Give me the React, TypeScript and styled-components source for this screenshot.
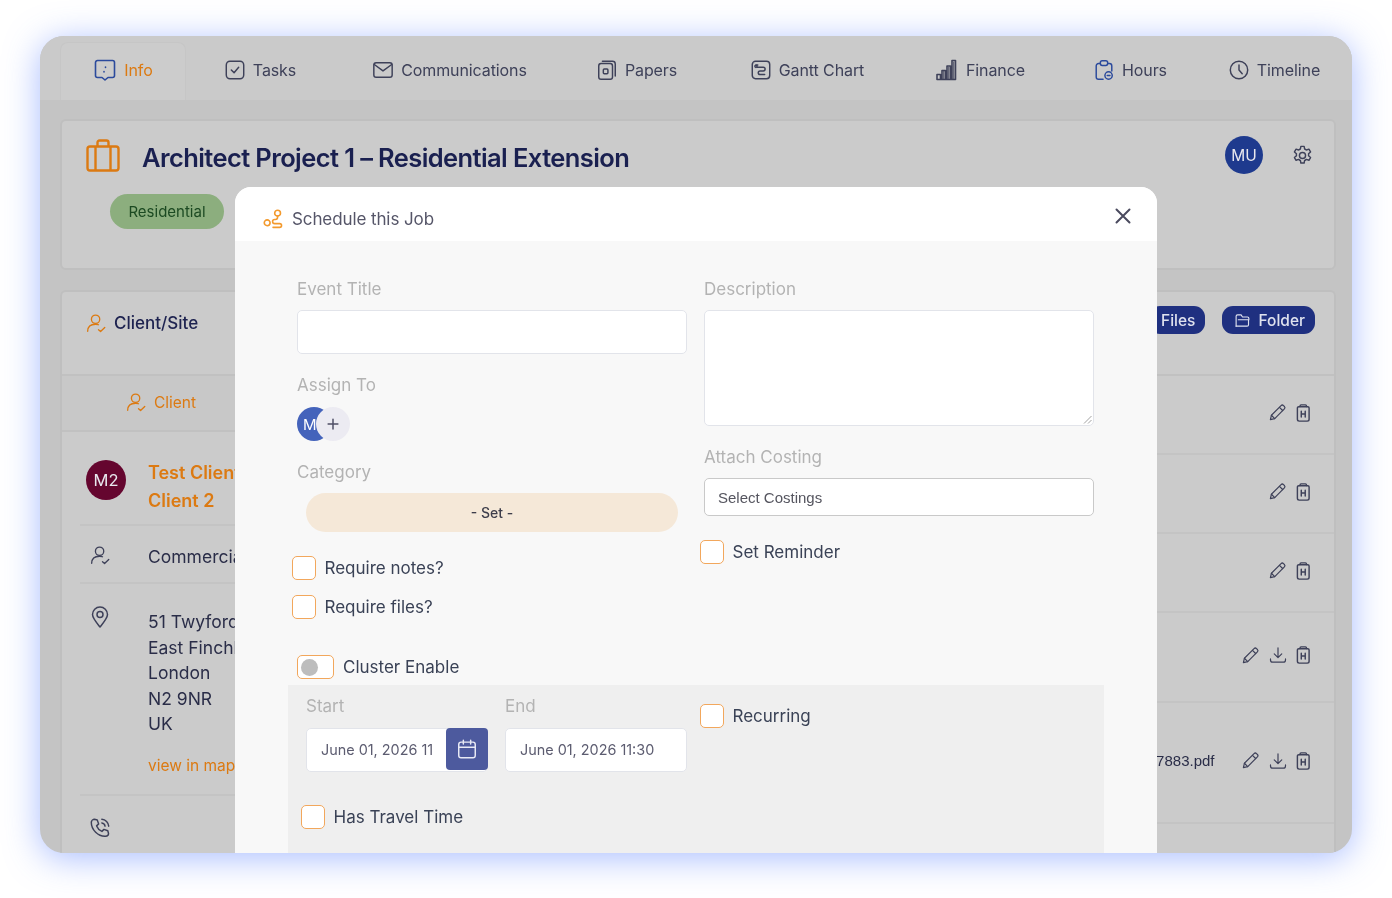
import React from 'react';
import styled, { createGlobalStyle } from 'styled-components';

const GlobalStyle = createGlobalStyle`
  html, body {
    margin: 0;
    padding: 0;
    background: #fff;
    font-family: Inter, "Noto Sans", "Liberation Sans", sans-serif;
  }
  * { box-sizing: border-box; }
`;

const Page = styled.div`
  width: 1392px;
  height: 898px;
  padding: 36px 40px 45px;
  overflow: hidden;
  filter: blur(0.35px);
`;

const Window = styled.div`
  position: relative;
  height: 817px;
  border-radius: 24px;
  background: #c4c4c4;
  box-shadow: 0 5px 34px rgba(84, 124, 255, 0.5);
  overflow: hidden;
  display: flex;
  flex-direction: column;
`;

const TabBar = styled.div`
  height: 64px;
  flex: none;
  display: grid;
  grid-template-columns: 126px 148px 231px 143px 198px 148px 152px 136px;
  padding: 6px 0 0 20px;
  background: #cacaca;
`;

const Tab = styled.div<{ $active?: boolean }>`
  display: flex;
  align-items: center;
  justify-content: center;
  gap: 7px;
  padding-bottom: 4px;
  font-size: 16px;
  letter-spacing: -0.1px;
  white-space: nowrap;
  color: ${(p) => (p.$active ? '#dc7a12' : '#3e4159')};
  background: ${(p) => (p.$active ? '#cccccc' : 'transparent')};
  border: 1px solid ${(p) => (p.$active ? '#c6c6c6' : 'transparent')};
  border-bottom: none;
  border-radius: 8px 8px 0 0;
`;

const TabIcon = styled.span<{ $blue?: boolean }>`
  display: flex;
  color: ${(p) => (p.$blue ? '#2b4a9c' : '#3e4159')};
`;

const Main = styled.div`
  flex: 1;
  display: flex;
  flex-direction: column;
  gap: 20px;
  padding: 19px 16px 0 20px;
`;

const Card = styled.div`
  background: #cbcbcb;
  border: 2px solid #bfbfbf;
  border-radius: 6px;
`;

const ProjectCard = styled(Card)`
  height: 151px;
  padding: 14px 20px 0 24px;
`;

const ProjectHead = styled.div`
  display: flex;
  align-items: center;
  gap: 22px;
  height: 40px;
`;

const ProjectTitle = styled.h1`
  flex: 1;
  margin: 4px 0 0;
  font-size: 25.5px;
  font-weight: 600;
  letter-spacing: -0.6px;
  color: #1a2050;
`;

const Avatar = styled.div<{ $bg: string; $size: number }>`
  width: ${(p) => p.$size}px;
  height: ${(p) => p.$size}px;
  flex: none;
  border-radius: 50%;
  display: flex;
  align-items: center;
  justify-content: center;
  color: #e8e8ee;
  background: ${(p) => p.$bg};
  font-size: 15.5px;
`;

const HeadActions = styled.div`
  display: flex;
  align-items: center;
  gap: 28px;
  color: #3e4159;
`;

const Tag = styled.div`
  width: 114px;
  height: 35px;
  margin: 19px 0 0 24px;
  border-radius: 18px;
  background: #8cae7e;
  color: #1c4a22;
  font-size: 15px;
  display: flex;
  align-items: center;
  justify-content: center;
`;

const ClientCard = styled(Card)`
  flex: 1;
  border-bottom: none;
  border-radius: 6px 6px 0 0;
`;

const ClientHead = styled.div`
  height: 84px;
  padding: 14px 19px 0 24px;
  display: flex;
  justify-content: space-between;
  align-items: flex-start;
  border-bottom: 2px solid #c1c1c1;
`;

const SectionTitle = styled.div`
  display: flex;
  align-items: center;
  gap: 8px;
  height: 28px;
  margin-top: 3px;
  font-size: 17px;
  font-weight: 500;
  color: #1e2350;
  svg { color: #dc7a12; }
`;

const HeadButtons = styled.div`
  display: flex;
  gap: 17px;
`;

const NavyButton = styled.div`
  height: 28px;
  padding: 0 10px 0 12px;
  display: flex;
  align-items: center;
  gap: 7px;
  border-radius: 11px;
  background: #1f3080;
  color: #dfe2ee;
  font-size: 15.5px;
  font-weight: 500;
`;

const ClientBody = styled.div`
  display: grid;
  grid-template-columns: 1fr 1fr;
`;

const LeftPane = styled.div`
  display: flex;
  flex-direction: column;
`;

const SubTabs = styled.div`
  height: 56px;
  padding: 0 0 2px 64px;
  display: flex;
  align-items: center;
  border-bottom: 2px solid #c1c1c1;
  background: #c8c8c8;
`;

const SubTab = styled.div`
  display: flex;
  align-items: center;
  gap: 8px;
  color: #dc7a12;
  font-size: 15.5px;
`;

const InfoRow = styled.div<{ $height: number }>`
  height: ${(p) => p.$height}px;
  margin-left: 18px;
  padding-left: 6px;
  display: flex;
  align-items: flex-start;
  gap: 22px;
  color: #2a2d48;
  border-bottom: 2px solid #c4c4c4;
  &:last-child { border-bottom: none; }
`;

const IconCell = styled.div<{ $top: number; $left: number }>`
  width: 40px;
  flex: none;
  padding: ${(p) => p.$top}px 0 0 ${(p) => p.$left}px;
  color: #3e4159;
`;

const ClientAvatar = styled(Avatar)`
  margin-top: 28px;
  font-size: 16.5px;
`;

const ClientName = styled.div`
  padding-top: 27px;
  font-size: 18px;
  font-weight: 600;
  line-height: 28px;
  color: #dc7a12;
  white-space: nowrap;
`;

const InfoText = styled.div`
  padding-top: 19px;
  font-size: 17.5px;
  line-height: 24px;
  white-space: nowrap;
`;

const Address = styled.div`
  padding-top: 25px;
  font-size: 17.5px;
  line-height: 25.6px;
  white-space: nowrap;
`;

const MapLink = styled.div`
  margin-top: 16px;
  font-size: 15.5px;
  color: #dc7a12;
`;

const FileList = styled.div`
  display: flex;
  flex-direction: column;
`;

const FileRow = styled.div<{ $height: number }>`
  height: ${(p) => p.$height}px;
  padding: 0 24px 4px 0;
  display: flex;
  align-items: center;
  justify-content: flex-end;
  gap: 26px;
  border-bottom: 2px solid #c4c4c4;
  &:last-child { border-bottom: none; }
`;

const FileName = styled.div`
  font-family: "Liberation Sans", Arial, sans-serif;
  font-size: 15px;
  color: #2a2d48;
  white-space: nowrap;
`;

const FileActions = styled.div`
  display: flex;
  align-items: center;
  gap: 9px;
  color: #3e4159;
`;

const Modal = styled.div`
  position: absolute;
  left: 195px;
  top: 151px;
  bottom: -40px;
  width: 922px;
  border-radius: 16px;
  background: #f8f8f8;
  overflow: hidden;
`;

const ModalHead = styled.div`
  height: 54px;
  background: #fff;
  padding: 10px 24px 0 28px;
  display: flex;
  align-items: center;
  gap: 9px;
  font-size: 17px;
  letter-spacing: -0.1px;
  color: #555568;
`;

const ModalTitle = styled.div`
  flex: 1;
`;

const CloseIcon = styled.svg`
  margin-top: -6px;
  color: #4a4a5e;
`;

const ModalBody = styled.div`
  padding: 36px 62px 0;
`;

const FormGrid = styled.div`
  display: grid;
  grid-template-columns: 390px 390px;
  column-gap: 17px;
`;

const Column = styled.div`
  display: flex;
  flex-direction: column;
`;

const Label = styled.div<{ $top?: number; $gap?: number }>`
  height: 24px;
  margin-top: ${(p) => p.$top || 0}px;
  margin-bottom: ${(p) => p.$gap || 9}px;
  font-size: 17px;
  line-height: 24px;
  color: #b3b3b3;
`;

const TextInput = styled.div<{ $height: number }>`
  height: ${(p) => p.$height}px;
  background: #fff;
  border: 1.5px solid #e2e4ea;
  border-radius: 5px;
  padding: 0 14px 2px;
  display: flex;
  align-items: center;
  font-size: 14.4px;
  color: #5c5c70;
  white-space: nowrap;
  overflow: hidden;
`;

const DescriptionBox = styled(TextInput)`
  position: relative;
`;

const ResizeGrip = styled.svg`
  position: absolute;
  right: 1px;
  bottom: 1px;
  color: #8a8a8a;
`;

const SelectBox = styled(TextInput)`
  border-color: #c9c9c9;
  color: #55555f;
  padding: 0 13px;
  font-family: "Liberation Sans", Arial, sans-serif;
  font-size: 15px;
`;

const Assignees = styled.div`
  display: flex;
  height: 34px;
`;

const AssignAvatar = styled.div`
  width: 34px;
  height: 34px;
  border-radius: 50%;
  background: #4463bb;
  color: #fff;
  font-size: 15px;
  display: flex;
  align-items: center;
  padding-left: 6px;
`;

const AddAvatar = styled.div`
  width: 34px;
  height: 34px;
  margin-left: -15px;
  border-radius: 50%;
  background: #ecebf2;
  color: #4f4f66;
  display: flex;
  align-items: center;
  justify-content: center;
`;

const CategoryPill = styled.div`
  height: 39px;
  margin: 0 9px;
  width: 372px;
  border-radius: 20px;
  background: #f5e8d8;
  color: #3d3d4a;
  font-size: 14px;
  font-weight: 500;
  display: flex;
  align-items: center;
  justify-content: center;
`;

const CheckRow = styled.label<{ $top?: number; $left?: number }>`
  display: flex;
  align-items: center;
  gap: 9px;
  height: 24px;
  margin-top: ${(p) => p.$top || 0}px;
  margin-left: ${(p) => p.$left || 0}px;
  font-size: 17px;
  color: #3a4256;
`;

const CheckBox = styled.span`
  width: 23.5px;
  height: 24px;
  flex: none;
  background: #fff;
  border: 1.5px solid #f2a75c;
  border-radius: 5px;
`;

const ToggleRow = styled(CheckRow)`
  margin-top: 36px;
`;

const ToggleTrack = styled.span`
  width: 37px;
  height: 24px;
  flex: none;
  background: #fff;
  border: 1.5px solid #f2a75c;
  border-radius: 5px;
  display: flex;
  align-items: center;
  padding-left: 3px;
`;

const ToggleKnob = styled.span`
  width: 17px;
  height: 17px;
  border-radius: 50%;
  background: #bdbdbd;
`;

const Panel = styled.div`
  margin: 6px -9px 0;
  padding: 9px 9px 40px;
  height: 200px;
  background: #efefef;
  display: grid;
  grid-template-columns: 390px 390px;
  column-gap: 17px;
`;

const PanelLeft = styled.div`
  padding-left: 9px;
`;

const DateGrid = styled.div`
  display: grid;
  grid-template-columns: 182px 182px;
  column-gap: 17px;
`;

const DateField = styled.div`
  position: relative;
`;

const CalendarButton = styled.div`
  position: absolute;
  top: 0;
  right: 0;
  width: 42px;
  height: 42px;
  border-radius: 4px;
  background: #4d5a9e;
  color: #e8eaf5;
  display: flex;
  align-items: center;
  justify-content: center;
`;

const Ico = ({ size = 20, w = 1.6, children }: { size?: number; w?: number; children: React.ReactNode }) => (
  <svg width={size} height={size} viewBox="0 0 24 24" fill="none" stroke="currentColor" strokeWidth={w} strokeLinecap="round" strokeLinejoin="round">
    {children}
  </svg>
);

const InfoIcon = () => (
  <Ico size={24}>
    <path d="M4.5 2.5h15a2 2 0 0 1 2 2v13a2 2 0 0 1-2 2H15l-3 2.5L9 19.5H4.5a2 2 0 0 1-2-2v-13a2 2 0 0 1 2-2z" />
    <path d="M11 13.5v.5M12.5 9v.5" />
  </Ico>
);
const TasksIcon = () => (
  <Ico size={22}>
    <rect x="2.5" y="2.5" width="19" height="19" rx="4" />
    <path d="M8 12l3 3 5-6" />
  </Ico>
);
const MailIcon = () => (
  <Ico size={22}>
    <rect x="2" y="4" width="20" height="16" rx="2.5" />
    <path d="M2.5 6l9.5 7 9.5-7" />
  </Ico>
);
const PapersIcon = () => (
  <Ico size={22}>
    <rect x="3" y="5" width="15" height="17" rx="2.5" />
    <path d="M7 2.5h11a3 3 0 0 1 3 3v13" />
    <rect x="8" y="11" width="5" height="5" rx="1" />
  </Ico>
);
const GanttIcon = () => (
  <Ico size={22}>
    <rect x="2.5" y="2.5" width="19" height="19" rx="3.5" />
    <path d="M6.5 6.5h2M8 9h6.5a2 2 0 0 1 0 4H11a2 2 0 0 0 0 4h5" />
    <circle cx="6.5" cy="8" r="1.2" />
  </Ico>
);
const FinanceIcon = () => (
  <Ico size={24}>
    <path d="M2 21.5v-5h3.5v5zM7 21.5v-9h3.5v9zM12 21.5V8h3.5v13.5zM17 21.5v-19h3.5v19zM2 21.5h18.5" />
    <path d="M8.8 13v8M13.8 9v12M18.8 4v17" strokeWidth="1" />
  </Ico>
);
const HoursIcon = () => (
  <Ico size={22}>
    <path d="M8 5H6a2.5 2.5 0 0 0-2.5 2.5v12A2.5 2.5 0 0 0 6 22h5M16 5h2a2.5 2.5 0 0 1 2.5 2.5V13" />
    <rect x="8" y="2" width="8" height="5" rx="2" />
    <circle cx="17" cy="18" r="4" />
    <path d="M15.5 18h3" />
  </Ico>
);
const ClockIcon = () => (
  <Ico size={22}>
    <circle cx="12" cy="12" r="9.5" />
    <path d="M12 6.5V12l3.5 4" />
  </Ico>
);
const Briefcase = () => (
  <svg width="34" height="33" viewBox="0 0 34 33" fill="none" stroke="#dc7a12" strokeWidth="2.4" strokeLinejoin="round">
    <rect x="1.5" y="7.5" width="31" height="24" rx="2.5" />
    <path d="M9.5 7.5v24M24.5 7.5v24M11.5 7.5V3.5a2 2 0 0 1 2-2h7a2 2 0 0 1 2 2v4" />
  </svg>
);
const GearIcon = () => (
  <Ico size={23} w={1.5}>
    <path d="M10.3 2.5h3.4l.5 2.7a7 7 0 0 1 1.9 1.1l2.6-.9 1.7 2.9-2.1 1.8a7 7 0 0 1 0 2.2l2.1 1.8-1.7 2.9-2.6-.9a7 7 0 0 1-1.9 1.1l-.5 2.7h-3.4l-.5-2.7a7 7 0 0 1-1.9-1.1l-2.6.9-1.7-2.9 2.1-1.8a7 7 0 0 1 0-2.2L3.6 8.3l1.7-2.9 2.6.9a7 7 0 0 1 1.9-1.1z" />
    <circle cx="12" cy="12" r="3.2" />
  </Ico>
);
const UserCheck = ({ size = 20 }: { size?: number }) => (
  <Ico size={size}>
    <circle cx="11.5" cy="7.5" r="5" />
    <path d="M2 22c0-5 3-8.5 9.5-8.5 1.5 0 2.5.2 3.5.6" />
    <path d="M15 20l2.5 2.3 5-5" />
  </Ico>
);
const FolderIcon = () => (
  <Ico size={17}>
    <path d="M3 20V6a2 2 0 0 1 2-2h5l2 3h7a2 2 0 0 1 2 2v2" />
    <path d="M3 20h15.5a2 2 0 0 0 2-2V11H6" />
  </Ico>
);
const PinIcon = () => (
  <svg width="18" height="22" viewBox="0 0 18 22" fill="none" stroke="currentColor" strokeWidth="1.5" strokeLinejoin="round">
    <path d="M9 21C5 16 1.5 12 1.5 8.5a7.5 7.5 0 0 1 15 0C16.5 12 13 16 9 21z" />
    <circle cx="9" cy="8.5" r="3" />
  </svg>
);
const PhoneIcon = () => (
  <Ico size={22}>
    <path d="M6 2.5l3 .8 1.5 4.2-2.2 2.2c1 2.6 3 4.6 5.8 6l2.2-2.2 4.2 1.5.8 3c0 1.8-1.5 3-3.2 3C10 21.5 2.5 14 2.5 5.7 2.5 4 4.2 2.5 6 2.5z" />
    <path d="M14 2.5a8 8 0 0 1 7.5 7.5M14 6.5a4 4 0 0 1 3.5 3.5" />
  </Ico>
);
const PencilIcon = () => (
  <Ico size={19} w={1.5}>
    <path d="M3 21l1.3-5.5L16.5 3.3a2.2 2.2 0 0 1 3.1 0l1.1 1.1a2.2 2.2 0 0 1 0 3.1L8.5 19.7z" />
    <path d="M14.5 5.5l4 4M4.3 15.5l4.2 4.2" />
  </Ico>
);
const DownloadIcon = () => (
  <Ico size={18} w={1.6}>
    <path d="M12 2.5V15M7 10.5l5 5 5-5M2 17v1.5a3 3 0 0 0 3 3h14a3 3 0 0 0 3-3V17" />
  </Ico>
);
const BinIcon = () => (
  <svg width="14.5" height="18" viewBox="0 0 16 20" fill="none" stroke="currentColor" strokeWidth="1.6" strokeLinecap="round" strokeLinejoin="round">
    <path d="M4 3H3a1.5 1.5 0 0 0-1.5 1.5V17a2 2 0 0 0 2 2h9a2 2 0 0 0 2-2V4.5A1.5 1.5 0 0 0 13 3h-1" />
    <path d="M4.5 3V2a1 1 0 0 1 1-1h5a1 1 0 0 1 1 1v1zM5.8 8v6.5M10.2 8v6.5M5.8 11.2h4.4" />
  </svg>
);
const RouteIcon = () => (
  <svg width="20" height="20" viewBox="0 0 24 24" fill="none" stroke="#f39a2e" strokeWidth="1.9" strokeLinecap="round" strokeLinejoin="round">
    <circle cx="5" cy="16.5" r="3.5" />
    <circle cx="17.5" cy="5" r="3.5" />
    <path d="M17.5 8.5V10a2.5 2.5 0 0 1-2.5 2.5h-1a2.5 2.5 0 0 0 0 5h6a2.2 2.2 0 0 1 0 4.500h-8" />
  </svg>
);
const PlusIcon = () => (
  <Ico size={18} w={2}>
    <path d="M12 5.5v13M5.5 12h13" />
  </Ico>
);
const CalendarIcon = () => (
  <Ico size={22}>
    <rect x="3" y="4.5" width="18" height="17" rx="2.5" />
    <path d="M3 10h18M8 2.5v4M16 2.5v4" />
  </Ico>
);

const tabs = [
  { label: 'Tasks', icon: <TasksIcon /> },
  { label: 'Communications', icon: <MailIcon /> },
  { label: 'Papers', icon: <PapersIcon /> },
  { label: 'Gantt Chart', icon: <GanttIcon /> },
  { label: 'Finance', icon: <FinanceIcon /> },
  { label: 'Hours', icon: <HoursIcon />, blue: true },
  { label: 'Timeline', icon: <ClockIcon /> },
];

const fileRows = [
  { height: 79, download: false },
  { height: 79, download: false },
  { height: 79, download: false },
  { height: 90, download: true },
  { height: 121, download: true, name: 'document_1737883.pdf' },
  { height: 40, download: false, empty: true },
];

export default function App() {
  return (
    <Page>
      <GlobalStyle />
      <Window>
        <TabBar>
          <Tab $active>
            <TabIcon $blue>
              <InfoIcon />
            </TabIcon>
            Info
          </Tab>
          {tabs.map((t) => (
            <Tab key={t.label}>
              <TabIcon $blue={t.blue}>{t.icon}</TabIcon>
              {t.label}
            </Tab>
          ))}
        </TabBar>
        <Main>
          <ProjectCard>
            <ProjectHead>
              <Briefcase />
              <ProjectTitle>Architect Project 1 – Residential Extension</ProjectTitle>
              <HeadActions>
                <Avatar $bg="#1e3a8e" $size={38}>MU</Avatar>
                <GearIcon />
              </HeadActions>
            </ProjectHead>
            <Tag>Residential</Tag>
          </ProjectCard>
          <ClientCard>
            <ClientHead>
              <SectionTitle>
                <UserCheck />
                Client/Site
              </SectionTitle>
              <HeadButtons>
                <NavyButton>Files</NavyButton>
                <NavyButton>
                  <FolderIcon />
                  Folder
                </NavyButton>
              </HeadButtons>
            </ClientHead>
            <ClientBody>
              <LeftPane>
                <SubTabs>
                  <SubTab>
                    <UserCheck />
                    Client
                  </SubTab>
                </SubTabs>
                <InfoRow $height={94}>
                  <ClientAvatar $bg="#65062f" $size={40}>M2</ClientAvatar>
                  <ClientName>
                    Test Client
                    <br />
                    Client 2
                  </ClientName>
                </InfoRow>
                <InfoRow $height={58}>
                  <IconCell $top={19} $left={4}>
                    <UserCheck />
                  </IconCell>
                  <InfoText>Commercial</InfoText>
                </InfoRow>
                <InfoRow $height={212}>
                  <IconCell $top={22} $left={5}>
                    <PinIcon />
                  </IconCell>
                  <Address>
                    51 Twyford Avenue
                    <br />
                    East Finchley
                    <br />
                    London
                    <br />
                    N2 9NR
                    <br />
                    UK
                    <MapLink>view in maps</MapLink>
                  </Address>
                </InfoRow>
                <InfoRow $height={58}>
                  <IconCell $top={21} $left={3}>
                    <PhoneIcon />
                  </IconCell>
                </InfoRow>
              </LeftPane>
              <FileList>
                {fileRows.map((r, i) => (
                  <FileRow key={i} $height={r.height}>
                    {r.name && <FileName>{r.name}</FileName>}
                    {!r.empty && (
                      <FileActions>
                        <PencilIcon />
                        {r.download && <DownloadIcon />}
                        <BinIcon />
                      </FileActions>
                    )}
                  </FileRow>
                ))}
              </FileList>
            </ClientBody>
          </ClientCard>
        </Main>
        <Modal>
          <ModalHead>
            <RouteIcon />
            <ModalTitle>Schedule this Job</ModalTitle>
            <CloseIcon width="20" height="20" viewBox="0 0 20 20" fill="none" stroke="currentColor" strokeWidth="2" strokeLinecap="round">
              <path d="M3.5 3.5l13 13M16.5 3.5l-13 13" />
            </CloseIcon>
          </ModalHead>
          <ModalBody>
            <FormGrid>
              <Column>
                <Label>Event Title</Label>
                <TextInput $height={44} />
                <Label $top={19} $gap={10}>Assign To</Label>
                <Assignees>
                  <AssignAvatar>M</AssignAvatar>
                  <AddAvatar>
                    <PlusIcon />
                  </AddAvatar>
                </Assignees>
                <Label $top={19}>Category</Label>
                <CategoryPill>- Set -</CategoryPill>
                <CheckRow $top={24} $left={-5}>
                  <CheckBox />
                  Require notes?
                </CheckRow>
                <CheckRow $top={15} $left={-5}>
                  <CheckBox />
                  Require files?
                </CheckRow>
              </Column>
              <Column>
                <Label>Description</Label>
                <DescriptionBox $height={116}>
                  <ResizeGrip width="9" height="9" viewBox="0 0 9 9" stroke="currentColor" strokeWidth="0.8">
                    <path d="M8.5 1L1 8.5M8.5 5L5 8.5" />
                  </ResizeGrip>
                </DescriptionBox>
                <Label $top={19}>Attach Costing</Label>
                <SelectBox $height={38}>Select Costings</SelectBox>
                <CheckRow $top={24} $left={-4}>
                  <CheckBox />
                  Set Reminder
                </CheckRow>
              </Column>
            </FormGrid>
            <ToggleRow>
              <ToggleTrack>
                <ToggleKnob />
              </ToggleTrack>
              Cluster Enable
            </ToggleRow>
            <Panel>
              <PanelLeft>
                <DateGrid>
                  <div>
                    <Label $gap={10}>Start</Label>
                    <DateField>
                      <TextInput $height={44}>June 01, 2026 11</TextInput>
                      <CalendarButton>
                        <CalendarIcon />
                      </CalendarButton>
                    </DateField>
                  </div>
                  <div>
                    <Label $gap={10}>End</Label>
                    <TextInput $height={44}>June 01, 2026 11:30</TextInput>
                  </div>
                </DateGrid>
                <CheckRow $top={33} $left={-5}>
                  <CheckBox />
                  Has Travel Time
                </CheckRow>
              </PanelLeft>
              <div>
                <CheckRow $top={10} $left={-4}>
                  <CheckBox />
                  Recurring
                </CheckRow>
              </div>
            </Panel>
          </ModalBody>
        </Modal>
      </Window>
    </Page>
  );
}
